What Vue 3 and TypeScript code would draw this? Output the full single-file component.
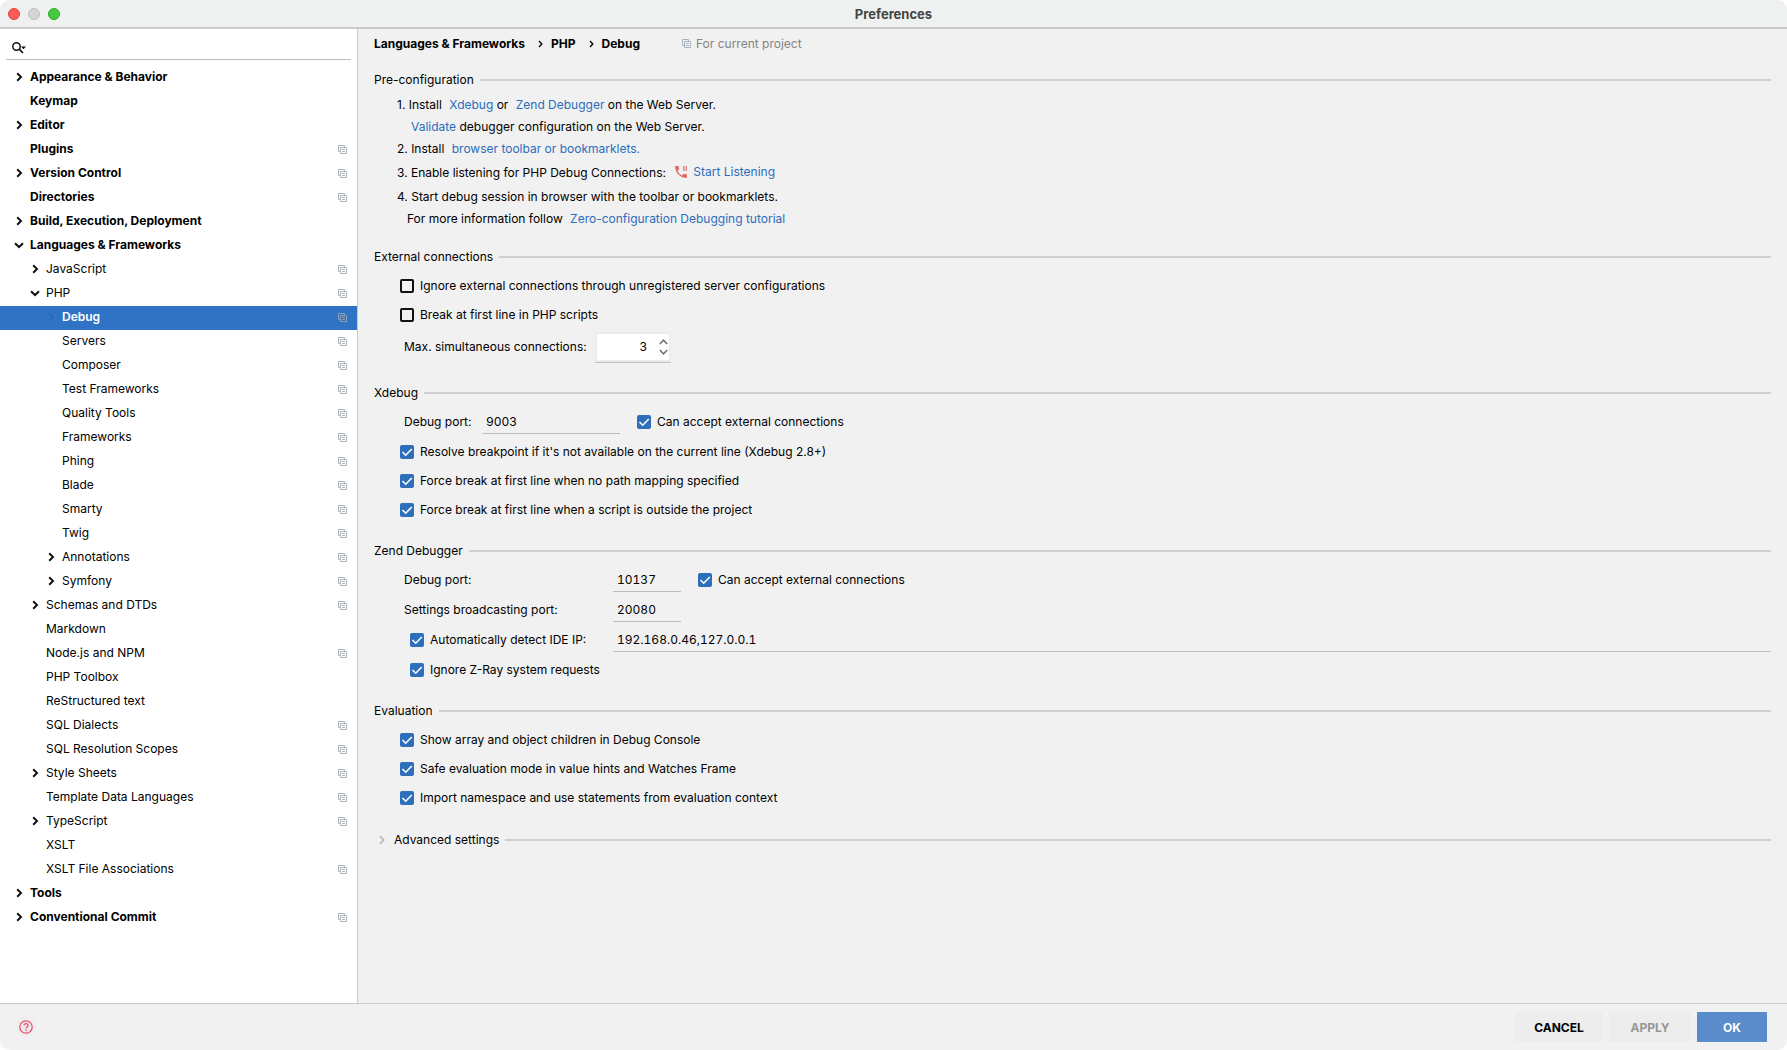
<script setup lang="ts">
import { reactive, ref } from 'vue'

interface TreeNode {
  label: string
  level: number
  state?: 'open' | 'closed' | 'ghost'
  project?: boolean
}

const nodes: TreeNode[] = [
  { label: 'Appearance & Behavior', level: 0, state: 'closed' },
  { label: 'Keymap', level: 0 },
  { label: 'Editor', level: 0, state: 'closed' },
  { label: 'Plugins', level: 0, project: true },
  { label: 'Version Control', level: 0, state: 'closed', project: true },
  { label: 'Directories', level: 0, project: true },
  { label: 'Build, Execution, Deployment', level: 0, state: 'closed' },
  { label: 'Languages & Frameworks', level: 0, state: 'open' },
  { label: 'JavaScript', level: 1, state: 'closed', project: true },
  { label: 'PHP', level: 1, state: 'open', project: true },
  { label: 'Debug', level: 2, state: 'ghost', project: true },
  { label: 'Servers', level: 2, project: true },
  { label: 'Composer', level: 2, project: true },
  { label: 'Test Frameworks', level: 2, project: true },
  { label: 'Quality Tools', level: 2, project: true },
  { label: 'Frameworks', level: 2, project: true },
  { label: 'Phing', level: 2, project: true },
  { label: 'Blade', level: 2, project: true },
  { label: 'Smarty', level: 2, project: true },
  { label: 'Twig', level: 2, project: true },
  { label: 'Annotations', level: 2, state: 'closed', project: true },
  { label: 'Symfony', level: 2, state: 'closed', project: true },
  { label: 'Schemas and DTDs', level: 1, state: 'closed', project: true },
  { label: 'Markdown', level: 1 },
  { label: 'Node.js and NPM', level: 1, project: true },
  { label: 'PHP Toolbox', level: 1 },
  { label: 'ReStructured text', level: 1 },
  { label: 'SQL Dialects', level: 1, project: true },
  { label: 'SQL Resolution Scopes', level: 1, project: true },
  { label: 'Style Sheets', level: 1, state: 'closed', project: true },
  { label: 'Template Data Languages', level: 1, project: true },
  { label: 'TypeScript', level: 1, state: 'closed', project: true },
  { label: 'XSLT', level: 1 },
  { label: 'XSLT File Associations', level: 1, project: true },
  { label: 'Tools', level: 0, state: 'closed' },
  { label: 'Conventional Commit', level: 0, state: 'closed', project: true },
]

const selected = ref('Debug')
const query = ref('')

const form = reactive({
  ignoreExternal: false,
  breakFirst: false,
  maxConnections: '3',
  xdebugPort: '9003',
  xdebugExternal: true,
  resolveBreakpoint: true,
  breakNoMapping: true,
  breakOutside: true,
  zendPort: '10137',
  zendExternal: true,
  broadcastPort: '20080',
  detectIp: true,
  ideIp: '192.168.0.46,127.0.0.1',
  ignoreZray: true,
  showChildren: true,
  safeEvaluation: true,
  importNamespace: true,
})

function step(delta: number) {
  form.maxConnections = String(Math.max(1, Number(form.maxConnections) + delta))
}
</script>

<template>
  <div class="window">
    <header class="titlebar">
      <div class="lights">
        <button class="light red" type="button" aria-label="Close"></button>
        <button class="light grey" type="button" aria-label="Minimize"></button>
        <button class="light green" type="button" aria-label="Zoom"></button>
      </div>
      <h1 class="title">Preferences</h1>
    </header>

    <div class="body">
      <aside class="sidebar">
        <div class="search">
          <svg class="search-icon" width="14" height="12" viewBox="0 0 14 12" aria-hidden="true">
            <circle cx="4.5" cy="4.5" r="3.7" fill="none" stroke="#111" stroke-width="1.5" />
            <path d="M7.2 7.2L11 11" stroke="#111" stroke-width="1.7" />
            <path d="M9 4.4h5l-2.5 2.8z" fill="#111" />
          </svg>
          <input v-model="query" class="search-input" type="text" aria-label="Search settings" />
        </div>
        <nav class="tree" aria-label="Settings">
          <button
            v-for="node in nodes"
            :key="node.label"
            type="button"
            class="node"
            :class="['level' + node.level, { selected: node.label === selected }]"
            @click="selected = node.label"
          >
            <span class="arrow" :class="node.state">
              <svg v-if="node.state === 'open'" width="10" height="10" viewBox="0 0 10 10" aria-hidden="true">
                <path d="M1 3.2L5 7L9 3.2" />
              </svg>
              <svg v-else-if="node.state" width="10" height="10" viewBox="0 0 10 10" aria-hidden="true">
                <path d="M3.2 1.2L7 5L3.2 8.8" />
              </svg>
            </span>
            <span class="node-label">{{ node.label }}</span>
            <svg v-if="node.project" class="copy" width="9" height="10" viewBox="0 -1 9 10" aria-hidden="true">
              <path d="M2 6.5H.5V.5H6.5V2M2.5 2.5H8.5V8.5H2.5zM4 4.5H7M4 6.5H7" />
            </svg>
          </button>
        </nav>
      </aside>

      <main class="content">
        <div class="crumbs">
          <span>Languages &amp; Frameworks</span>
          <svg class="crumb-sep" width="5" height="8" viewBox="0 0 5 8" aria-hidden="true"><path d="M1 1L3.8 4L1 7" /></svg>
          <span>PHP</span>
          <svg class="crumb-sep" width="5" height="8" viewBox="0 0 5 8" aria-hidden="true"><path d="M1 1L3.8 4L1 7" /></svg>
          <span>Debug</span>
          <span class="scope">
            <svg class="copy" width="9" height="10" viewBox="0 0 9 10" aria-hidden="true">
              <path d="M2 6.5H.5V.5H6.5V2M2.5 2.5H8.5V8.5H2.5zM4 4.5H7M4 6.5H7" />
            </svg>
            For current project
          </span>
        </div>

        <section class="group">
          <h2 class="heading">Pre-configuration</h2>
          <div class="steps">
            <p class="line">1. Install <a class="gap" href="#">Xdebug</a> or <a class="gap" href="#">Zend Debugger</a> on the Web Server.</p>
            <p class="line in-validate"><a href="#">Validate</a> debugger configuration on the Web Server.</p>
            <p class="line">2. Install <a class="gap" href="#">browser toolbar or bookmarklets.</a></p>
            <p class="line tall">3. Enable listening for PHP Debug Connections: <a class="listen" href="#"><svg width="12" height="12" viewBox="0 0 12 12" aria-hidden="true">
              <path d="M0 0H3.6L4.2 3.4L2.5 5Q4 7.9 7 9.4L8.6 7.8L12 8.4V12Q7 12 3.5 8.5Q0 5 0 0z" fill="#dd6b6b" />
              <path d="M8 0H9.5V5H8zM10.5 0H12V5H10.5z" fill="#e58a8a" />
            </svg>Start Listening</a></p>
            <p class="line tall">4. Start debug session in browser with the toolbar or bookmarklets.</p>
            <p class="line in-more">For more information follow <a class="gap" href="#">Zero-configuration Debugging tutorial</a></p>
          </div>
        </section>

        <section class="group roomy">
          <h2 class="heading">External connections</h2>
          <label class="check"><input v-model="form.ignoreExternal" type="checkbox" />Ignore external connections through unregistered server configurations</label>
          <label class="check"><input v-model="form.breakFirst" type="checkbox" />Break at first line in PHP scripts</label>
          <div class="field spinner-row">
            <label class="spinner-label" for="max">Max. simultaneous connections:</label>
            <span class="spinner">
              <input id="max" v-model="form.maxConnections" type="text" />
              <span class="steppers">
                <button type="button" aria-label="Increase" @click="step(1)">
                  <svg width="9" height="6" viewBox="0 0 9 6"><path d="M.8 5L4.5 1.2L8.2 5" /></svg>
                </button>
                <button type="button" aria-label="Decrease" @click="step(-1)">
                  <svg width="9" height="6" viewBox="0 0 9 6"><path d="M.8 1L4.5 4.8L8.2 1" /></svg>
                </button>
              </span>
            </span>
          </div>
        </section>

        <section class="group">
          <h2 class="heading">Xdebug</h2>
          <div class="field">
            <label class="xport" for="xport">Debug port:</label>
            <input id="xport" v-model="form.xdebugPort" class="text medium" type="text" />
            <label class="check inline"><input v-model="form.xdebugExternal" type="checkbox" />Can accept external connections</label>
          </div>
          <label class="check"><input v-model="form.resolveBreakpoint" type="checkbox" />Resolve breakpoint if it's not available on the current line (Xdebug 2.8+)</label>
          <label class="check"><input v-model="form.breakNoMapping" type="checkbox" />Force break at first line when no path mapping specified</label>
          <label class="check"><input v-model="form.breakOutside" type="checkbox" />Force break at first line when a script is outside the project</label>
        </section>

        <section class="group snug">
          <h2 class="heading">Zend Debugger</h2>
          <div class="field">
            <label class="zlabel" for="zport">Debug port:</label>
            <input id="zport" v-model="form.zendPort" class="text short" type="text" />
            <label class="check inline"><input v-model="form.zendExternal" type="checkbox" />Can accept external connections</label>
          </div>
          <div class="field">
            <label class="zlabel" for="bport">Settings broadcasting port:</label>
            <input id="bport" v-model="form.broadcastPort" class="text short" type="text" />
          </div>
          <div class="field">
            <label class="check zlabel nested"><input v-model="form.detectIp" type="checkbox" />Automatically detect IDE IP:</label>
            <input v-model="form.ideIp" class="text wide" type="text" aria-label="IDE IP" />
          </div>
          <div class="field">
            <label class="check nested"><input v-model="form.ignoreZray" type="checkbox" />Ignore Z-Ray system requests</label>
          </div>
        </section>

        <section class="group roomy">
          <h2 class="heading">Evaluation</h2>
          <label class="check"><input v-model="form.showChildren" type="checkbox" />Show array and object children in Debug Console</label>
          <label class="check"><input v-model="form.safeEvaluation" type="checkbox" />Safe evaluation mode in value hints and Watches Frame</label>
          <label class="check"><input v-model="form.importNamespace" type="checkbox" />Import namespace and use statements from evaluation context</label>
        </section>

        <h2 class="heading advanced">
          <button type="button">
            <svg width="6" height="10" viewBox="0 0 6 10" aria-hidden="true"><path d="M1 1.2L4.8 5L1 8.8" /></svg>
            Advanced settings
          </button>
        </h2>
      </main>
    </div>

    <footer class="footer">
      <button class="help" type="button" aria-label="Help">
        <svg width="14" height="14" viewBox="0 0 14 14" aria-hidden="true">
          <circle cx="7" cy="7" r="6.2" />
          <path d="M5 5.6Q5 3.7 7 3.7T9 5.5Q9 6.4 8 7Q7 7.6 7 8.5M7 9.6V10.9" />
        </svg>
      </button>
      <div class="actions">
        <button class="cancel" type="button">CANCEL</button>
        <button class="apply" type="button" disabled>APPLY</button>
        <button class="ok" type="button">OK</button>
      </div>
    </footer>
  </div>
</template>

<style>
body {
  margin: 0;
  background: #fff;
}
</style>

<style scoped>
.window {
  display: flex;
  flex-direction: column;
  min-height: 100vh;
  overflow: hidden;
  border-radius: 10px;
  background: #f1f1f1;
  color: #000;
  font: 12px/16px Inter, "Liberation Sans", sans-serif;
}

button,
input {
  margin: 0;
  padding: 0;
  border: 0;
  border-radius: 0;
  background: none;
  color: inherit;
  font: inherit;
}

h1,
h2,
p {
  margin: 0;
  font-size: inherit;
  font-weight: 400;
}

a {
  color: #2b6dbd;
  text-decoration: none;
}

svg {
  flex: none;
  fill: none;
}

.titlebar {
  display: grid;
  grid-template-columns: 1fr auto 1fr;
  align-items: center;
  height: 27px;
  border-bottom: 2px solid #cacaca;
  background: #eff1f1;
}

.lights {
  display: flex;
  gap: 8px;
  padding-left: 8px;
}

.light {
  width: 12px;
  height: 12px;
  border: 1px solid;
  border-radius: 50%;
}

.red {
  border-color: #e0443e;
  background: #fc5b57;
}

.grey {
  border-color: #bdbdbd;
  background: #d5d5d5;
}

.green {
  border-color: #2ea82c;
  background: #45c93f;
}

.title {
  color: #444;
  font-size: 13px;
  font-weight: 700;
}

.body {
  display: flex;
  flex: 1;
}

.sidebar {
  flex: none;
  width: 357px;
  border-right: 1px solid #c8c8c8;
  background: #fff;
}

.search {
  display: flex;
  align-items: center;
  gap: 6px;
  height: 30px;
  margin: 0 6px 6px;
  padding-left: 6px;
  border-bottom: 1px solid #bdbdbd;
}

.search-icon {
  margin-top: 7px;
}

.search-input {
  flex: 1;
  outline: none;
}

.node {
  display: flex;
  align-items: center;
  width: 100%;
  height: 24px;
  padding: 0 10px 2px 14px;
  text-align: left;
}

.level0 {
  font-weight: 700;
}

.level1 {
  padding-left: 30px;
}

.level2 {
  padding-left: 46px;
}

.selected {
  background: #3072c4;
  color: #fff;
  font-weight: 600;
}

.arrow {
  display: flex;
  width: 16px;
}

.arrow path {
  stroke: #111;
  stroke-width: 2;
}

.arrow.ghost path {
  stroke: #2b69b8;
}

.node-label {
  flex: 1;
}

.copy path {
  stroke: #a9b4bc;
  stroke-width: 1;
}

.selected .copy path {
  stroke: #8aa0b8;
}

.content {
  flex: 1;
  padding: 0 16px;
}

.crumbs {
  display: flex;
  align-items: center;
  height: 30px;
  margin-bottom: 7px;
  font-weight: 700;
}

.crumb-sep {
  margin: 0 8px 0 13px;
}

.crumb-sep path {
  stroke: #111;
  stroke-width: 1.5;
}

.scope {
  display: flex;
  align-items: center;
  gap: 5px;
  margin-left: 42px;
  color: #848484;
  font-weight: 400;
}

.group {
  display: flex;
  flex-direction: column;
  margin-bottom: 13px;
}

.snug {
  margin-bottom: 12px;
}

.roomy {
  margin-bottom: 14px;
}

.heading {
  display: flex;
  align-items: center;
  gap: 6px;
  height: 28px;
}

.heading::after {
  flex: 1;
  height: 2px;
  background: #cfcfcf;
  content: "";
}

.steps {
  padding-left: 23px;
}

.line {
  display: flex;
  align-items: center;
  height: 22px;
  white-space: pre;
}

.tall {
  box-sizing: border-box;
  height: 24px;
  padding-top: 2px;
}

.in-validate {
  padding-left: 14px;
}

.in-more {
  padding-left: 10px;
}

.gap {
  margin-left: 4px;
}

.listen {
  display: flex;
  align-items: center;
  gap: 6px;
  margin: 0 0 2px 6px;
}

.check {
  display: flex;
  align-items: center;
  gap: 6px;
  height: 29px;
  padding-left: 26px;
}

.check input {
  width: 14px;
  height: 14px;
  border: 2px solid #111;
  border-radius: 2px;
  appearance: none;
}

.check input:checked {
  border: 0;
  background: #2e6fbc url("data:image/svg+xml,%3Csvg xmlns='http://www.w3.org/2000/svg' viewBox='0 0 14 14'%3E%3Cpath d='M2.5 7l3.2 3.2L11.8 4' fill='none' stroke='white' stroke-width='1.6'/%3E%3C/svg%3E");
}

.inline {
  margin-left: 17px;
  padding-left: 0;
}

.field {
  display: flex;
  align-items: center;
  height: 30px;
  padding-left: 30px;
}

.field .nested {
  padding-left: 6px;
}

.spinner-row {
  gap: 12px;
  height: 36px;
}

.spinner-label {
  width: 179px;
  white-space: nowrap;
}

.spinner {
  display: flex;
  width: 72px;
  height: 26px;
  border: 2px solid #ececec;
  background: #fff;
  box-shadow: 0 1px #c0c0c0;
}

.spinner input {
  width: 50px;
  text-align: right;
}

.steppers {
  display: flex;
  flex-direction: column;
  justify-content: space-evenly;
  margin-left: auto;
  padding-right: 1px;
}

.steppers button {
  display: flex;
}

.steppers path {
  stroke: #6e6e6e;
  stroke-width: 1.5;
}

.text {
  box-sizing: border-box;
  height: 24px;
  padding: 0 4px;
  border-bottom: 1px solid #bdbdbd;
  font-variant-numeric: tabular-nums;
}

.xport {
  width: 78px;
}

.zlabel {
  box-sizing: border-box;
  flex: none;
  width: 209px;
}

.medium {
  width: 138px;
}

.short {
  width: 68px;
}

.wide {
  flex: 1;
}

.advanced button {
  display: flex;
  align-items: center;
  gap: 9px;
  padding-left: 5px;
}

.advanced path {
  stroke: #a9b4bc;
  stroke-width: 1.5;
}

.footer {
  display: flex;
  align-items: center;
  justify-content: space-between;
  height: 46px;
  padding: 0 20px 0 16px;
  border-top: 1px solid #c8c8c8;
}

.help {
  display: flex;
  padding: 3px;
  border-radius: 50%;
  background: #ededed;
}

.help svg {
  stroke: #f0506e;
  stroke-width: 1.3;
}

.actions {
  display: flex;
  gap: 6px;
}

.actions button {
  height: 30px;
  padding-top: 2px;
  background: #ededed;
  font-weight: 700;
}

.actions .cancel {
  width: 88px;
}

.actions .apply {
  width: 82px;
  color: #979797;
}

.actions .ok {
  width: 70px;
  background: #5a8bcb;
  color: #fff;
}
</style>
